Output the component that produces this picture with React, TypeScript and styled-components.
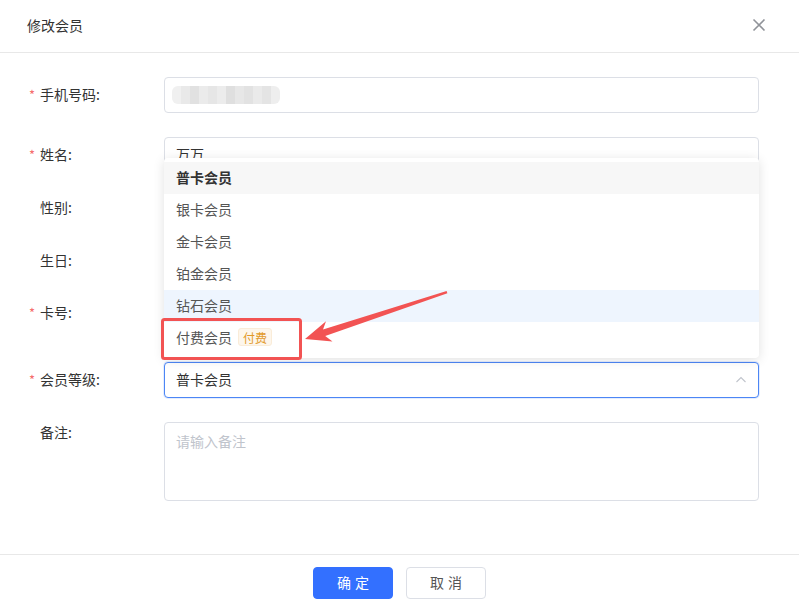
import React from "react";
import styled, { createGlobalStyle } from "styled-components";

const GlobalStyle = createGlobalStyle`
  html, body {
    margin: 0;
    padding: 0;
    background: #fff;
  }
  body {
    font-family: "Noto Sans CJK SC", "Noto Sans", sans-serif;
    color: #333;
  }
  * {
    box-sizing: border-box;
  }
`;

const Dialog = styled.div`
  position: relative;
  width: 799px;
  height: 607px;
  background: #fff;
  display: flex;
  flex-direction: column;
`;

const Header = styled.div`
  height: 53px;
  padding: 0 27px;
  display: flex;
  align-items: center;
  justify-content: space-between;
  border-bottom: 1px solid #e8e8e8;
`;

const Title = styled.div`
  font-size: 14px;
  color: #333;
  margin-top: -3px;
`;

const Close = styled.div`
  width: 14px;
  height: 14px;
  margin-right: 6px;
  margin-top: -2px;
  color: #909399;
  display: flex;
`;

const Body = styled.div`
  flex: 1;
  padding: 24px 40px 0 29px;
`;

const Row = styled.div<{ $gap: number }>`
  display: flex;
  margin-bottom: ${(p) => p.$gap}px;
`;

const Label = styled.div<{ $top?: boolean }>`
  width: 135px;
  flex-shrink: 0;
  display: flex;
  align-items: ${(p) => (p.$top ? "flex-start" : "center")};
  height: ${(p) => (p.$top ? "22px" : "36px")};
  padding-bottom: ${(p) => (p.$top ? "0" : "2px")};
  font-size: 14px;
  color: #333;
`;

const Star = styled.span<{ $show: boolean }>`
  width: 11px;
  color: #f56c6c;
  font-size: 13px;
  visibility: ${(p) => (p.$show ? "visible" : "hidden")};
`;

const Field = styled.div`
  flex: 1;
  position: relative;
`;

const Input = styled.div<{ $focus?: boolean }>`
  height: 36px;
  border: 1px solid ${(p) => (p.$focus ? "#4c86f5" : "#dcdfe6")};
  border-radius: 4px;
  padding: 0 11px 2px;
  display: flex;
  align-items: center;
  font-size: 14px;
  color: #333;
  background: #fff;
  box-shadow: ${(p) => (p.$focus ? "0 0 0 1px rgba(76,134,245,0.15)" : "none")};
`;

const Blank = styled.div`
  height: 36px;
`;

const Textarea = styled.div`
  height: 79px;
  border: 1px solid #dcdfe6;
  border-radius: 4px;
  padding: 8px 11px;
  font-size: 14px;
  color: #c0c4cc;
`;

const Mosaic = styled.div`
  display: flex;
  margin-left: -4px;
  margin-top: 2px;
  height: 18px;
  border-radius: 6px;
  overflow: hidden;
  opacity: 0.85;
`;

const Cell = styled.span<{ $c: string }>`
  width: 9px;
  height: 18px;
  background: ${(p) => p.$c};
`;

const Chevron = styled.div`
  margin-left: auto;
  margin-top: 2px;
  width: 12px;
  height: 12px;
  color: #c0c4cc;
  display: flex;
`;

const Dropdown = styled.div`
  position: absolute;
  left: 0;
  right: 0;
  bottom: calc(100% + 4px);
  background: #fff;
  border-radius: 4px;
  padding: 4px 0;
  box-shadow: 0 2px 12px rgba(0, 0, 0, 0.12);
  z-index: 2;
`;

const Option = styled.div<{ $selected?: boolean; $hover?: boolean }>`
  height: 32px;
  padding: 0 12px 2px;
  display: flex;
  align-items: center;
  gap: 6px;
  font-size: 14px;
  color: ${(p) => (p.$selected ? "#333" : "#555")};
  font-weight: ${(p) => (p.$selected ? 700 : 400)};
  background: ${(p) => (p.$selected ? "#f7f7f7" : p.$hover ? "#eef5fe" : "#fff")};
`;

const Tag = styled.span`
  height: 18px;
  padding: 0 4px;
  border: 1px solid #faecd8;
  background: #fdf6ec;
  color: #e29a2a;
  font-size: 12px;
  border-radius: 3px;
  display: flex;
  align-items: center;
`;

const Footer = styled.div`
  height: 53px;
  border-top: 1px solid #e8e8e8;
  display: flex;
  justify-content: center;
  gap: 13px;
  padding-top: 12px;
`;

const Button = styled.button<{ $primary?: boolean }>`
  width: 80px;
  height: 32px;
  border-radius: 4px;
  font-family: inherit;
  font-size: 14px;
  letter-spacing: 4px;
  padding: 0 0 2px 4px;
  cursor: pointer;
  border: 1px solid ${(p) => (p.$primary ? "#3370ff" : "#dcdfe6")};
  background: ${(p) => (p.$primary ? "#3370ff" : "#fff")};
  color: ${(p) => (p.$primary ? "#fff" : "#555")};
`;

const Annotation = styled.svg`
  position: absolute;
  left: 0;
  top: 0;
  width: 799px;
  height: 607px;
  pointer-events: none;
  z-index: 5;
`;

const mosaic = [
  "#eeeeee", "#e6e6e6", "#dcdcdc", "#e8e8e8", "#e2e2e2", "#e9e9e9", "#dadada",
  "#e3e3e3", "#dddddd", "#e7e7e7", "#e0e0e0", "#ececec",
];

const levels = ["普卡会员", "银卡会员", "金卡会员", "铂金会员", "钻石会员"];

export default function App() {
  return (
    <>
      <GlobalStyle />
      <Dialog>
        <Header>
          <Title>修改会员</Title>
          <Close>
            <svg width="14" height="14" viewBox="0 0 14 14">
              <path d="M1.5 1.5 L12.5 12.5 M12.5 1.5 L1.5 12.5" stroke="currentColor" strokeWidth="1.6" />
            </svg>
          </Close>
        </Header>
        <Body>
          <Row $gap={24}>
            <Label><Star $show>*</Star>手机号码:</Label>
            <Field>
              <Input>
                <Mosaic>
                  {mosaic.map((c, i) => (
                    <Cell key={i} $c={c} />
                  ))}
                </Mosaic>
              </Input>
            </Field>
          </Row>
          <Row $gap={17}>
            <Label><Star $show>*</Star>姓名:</Label>
            <Field>
              <Input>万万</Input>
            </Field>
          </Row>
          <Row $gap={17}>
            <Label><Star $show={false}>*</Star>性别:</Label>
            <Field><Blank /></Field>
          </Row>
          <Row $gap={16}>
            <Label><Star $show={false}>*</Star>生日:</Label>
            <Field><Blank /></Field>
          </Row>
          <Row $gap={31}>
            <Label><Star $show>*</Star>卡号:</Label>
            <Field><Blank /></Field>
          </Row>
          <Row $gap={24}>
            <Label><Star $show>*</Star>会员等级:</Label>
            <Field>
              <Dropdown>
                {levels.map((l, i) => (
                  <Option key={l} $selected={i === 0} $hover={i === 4}>
                    {l}
                  </Option>
                ))}
                <Option>
                  付费会员<Tag>付费</Tag>
                </Option>
              </Dropdown>
              <Input $focus>
                普卡会员
                <Chevron>
                  <svg width="12" height="12" viewBox="0 0 12 12">
                    <path d="M1.5 8 L6 3.5 L10.5 8" fill="none" stroke="currentColor" strokeWidth="1.1" />
                  </svg>
                </Chevron>
              </Input>
            </Field>
          </Row>
          <Row $gap={0}>
            <Label $top><Star $show={false}>*</Star>备注:</Label>
            <Field>
              <Textarea>请输入备注</Textarea>
            </Field>
          </Row>
        </Body>
        <Footer>
          <Button $primary>确定</Button>
          <Button>取消</Button>
        </Footer>
        <Annotation viewBox="0 0 799 607">
          <rect x="162.5" y="319.5" width="138" height="39" rx="2" fill="none" stroke="#f25353" strokeWidth="3" />
          <polygon
            points="305,339 332.5,341.5 325.2,336 447.4,293.2 446.6,291 323,329.4 326,321.3"
            fill="#f25353"
          />
        </Annotation>
      </Dialog>
    </>
  );
}
